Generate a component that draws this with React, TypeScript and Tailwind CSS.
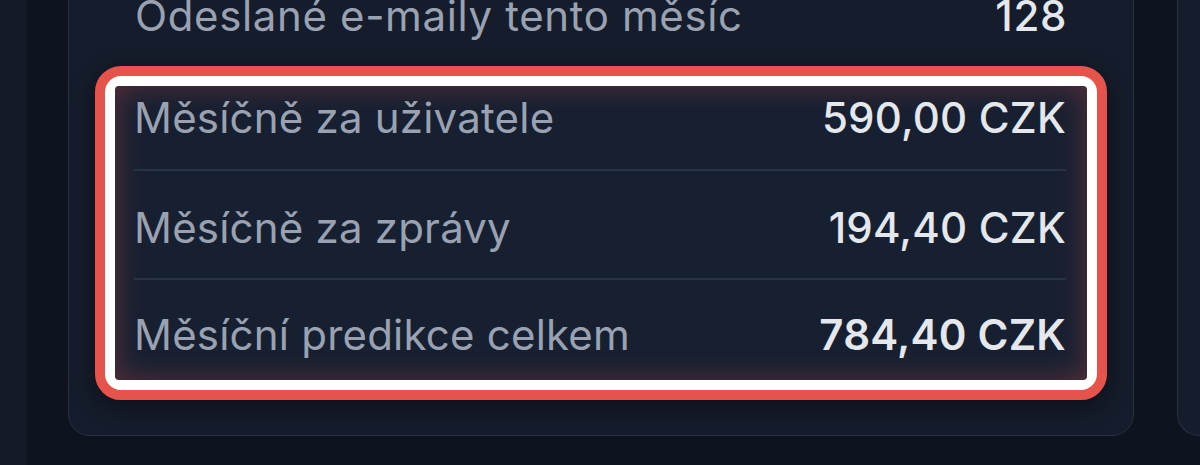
import React from 'react';

const rows = [
  { label: 'Měsíčně za uživatele', value: '590,00 CZK', pad: 'pt-[10px] pb-[29px]', weight: 'font-medium' },
  { label: 'Měsíčně za zprávy', value: '194,40 CZK', pad: 'pt-[35px] pb-[28px]', weight: 'font-medium' },
  { label: 'Měsíční predikce celkem', value: '784,40 CZK', pad: 'pt-[33px] pb-[23px]', weight: 'font-semibold' },
];

export default function App() {
  return (
    <div
      className="flex h-[465px] w-[1200px] items-start overflow-hidden bg-[#0e1320]"
      style={{ fontFamily: 'Inter, "Noto Sans", sans-serif' }}
    >
      <div className="h-full w-[27px] shrink-0 bg-[#141a28]" />

      <div className="ml-[41px] -mt-[40px] w-[1066px] shrink-0 rounded-b-[22px] border border-[#273142] bg-[#151c2b] px-[26px] pt-[33px] pb-[35px]">
        <div className="flex items-center justify-between px-[40px] text-[42px] leading-[44px] tracking-[0.015em]">
          <span className="text-[#9aa2b1]">Odeslané e-maily tento měsíc</span>
          <span className="font-medium text-[#e4e7ec]">128</span>
        </div>

        <div className="mt-[28px] rounded-[26px] border-[10px] border-[#e5534b] bg-white p-[10px] shadow-[0_6px_24px_rgba(0,0,0,0.45)]">
          <div className="rounded-[4px] bg-[#172031] pl-[19px] pr-[21px] shadow-[inset_0_0_30px_rgba(229,83,75,0.32)]">
            {rows.map((r, i) => (
              <div
                key={r.label}
                className={`flex items-center justify-between text-[42px] leading-[44px] tracking-[0.005em] ${r.pad} ${i > 0 ? 'border-t-2 border-[#283345]' : ''}`}
              >
                <span className="text-[#9aa2b1]">{r.label}</span>
                <span className={`${r.weight} text-[#e4e7ec]`}>{r.value}</span>
              </div>
            ))}
          </div>
        </div>
      </div>

      <div className="ml-[43px] -mt-[40px] h-[476px] flex-1 rounded-bl-[22px] border border-r-0 border-[#273142] bg-[#151c2b]" />
    </div>
  );
}
